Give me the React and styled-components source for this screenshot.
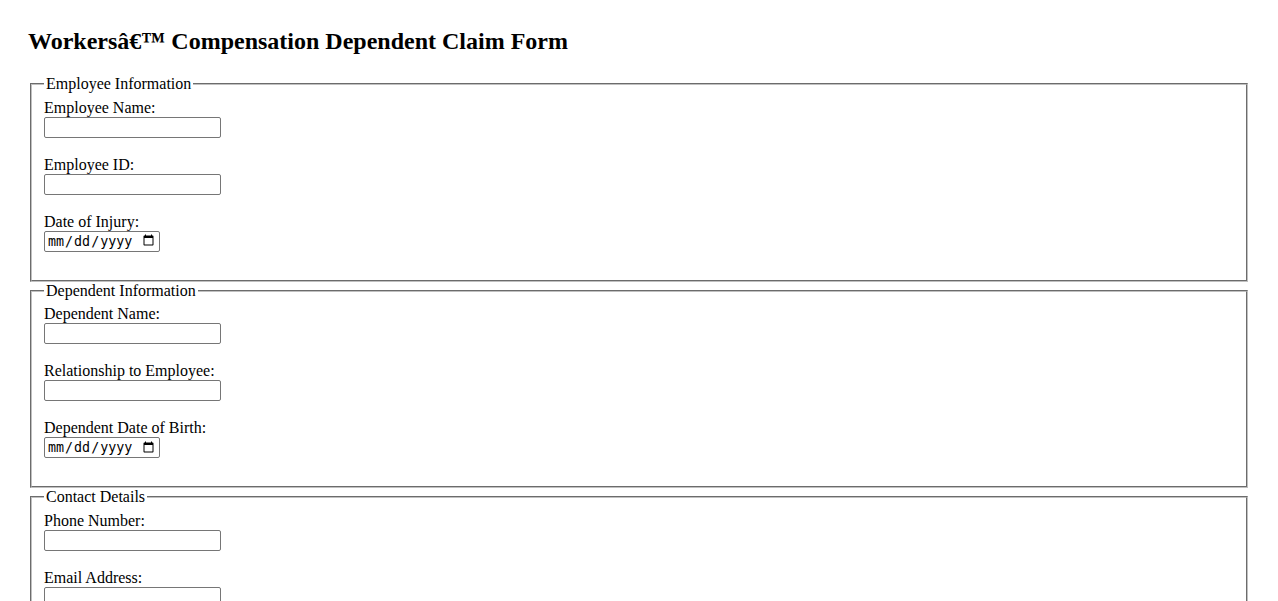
import React from 'react'
import styled, { createGlobalStyle } from 'styled-components'

const GlobalStyle = createGlobalStyle`
  body {
    margin: 8px;
    padding: 20px;
    font-family: "Liberation Serif", "Times New Roman", serif;
    font-size: 16px;
    color: #000;
    background: #fff;
  }
`

const Title = styled.h2`
  font-size: 24px;
  font-weight: 700;
  margin: 0 0 20px;
`

const Section = styled.fieldset`
  margin: 0 2px;
  padding: 5.6px 12px 10px;
  border: 2px groove #c0c0c0;
`

const Legend = styled.legend`
  padding: 0 2px;
`

const Label = styled.label`
  display: inline;
`

const TextInput = styled.input`
  box-sizing: border-box;
  width: 177px;
  height: 21px;
  font-family: "Liberation Sans", Arial, sans-serif;
  font-size: 13.33px;
  border: 1px solid #767676;
  border-radius: 2px;
  padding: 1px 2px;
`

const DateInput = styled.input`
  box-sizing: border-box;
  width: 116px;
  height: 21px;
  font-size: 13.33px;
  border: 1px solid #767676;
  border-radius: 2px;
  padding: 1px 2px;
`

const fields = [
  {
    legend: 'Employee Information',
    items: [
      { id: 'employeeName', label: 'Employee Name:', type: 'text' },
      { id: 'employeeId', label: 'Employee ID:', type: 'text' },
      { id: 'injuryDate', label: 'Date of Injury:', type: 'date' }
    ]
  },
  {
    legend: 'Dependent Information',
    items: [
      { id: 'dependentName', label: 'Dependent Name:', type: 'text' },
      { id: 'relationship', label: 'Relationship to Employee:', type: 'text' },
      { id: 'dependentDob', label: 'Dependent Date of Birth:', type: 'date' }
    ]
  },
  {
    legend: 'Contact Details',
    items: [
      { id: 'phone', label: 'Phone Number:', type: 'tel' },
      { id: 'email', label: 'Email Address:', type: 'email' }
    ]
  }
]

const App = () => (
  <>
    <GlobalStyle />
    <Title>Workersâ€™ Compensation Dependent Claim Form</Title>
    <form>
      {fields.map(section => (
        <Section key={section.legend}>
          <Legend>{section.legend}</Legend>
          {section.items.map(item => (
            <React.Fragment key={item.id}>
              <Label htmlFor={item.id}>{item.label}</Label><br />
              {item.type === 'date'
                ? <DateInput type="date" id={item.id} />
                : <TextInput type={item.type} id={item.id} />}
              <br /><br />
            </React.Fragment>
          ))}
        </Section>
      ))}
    </form>
  </>
)

export default App
